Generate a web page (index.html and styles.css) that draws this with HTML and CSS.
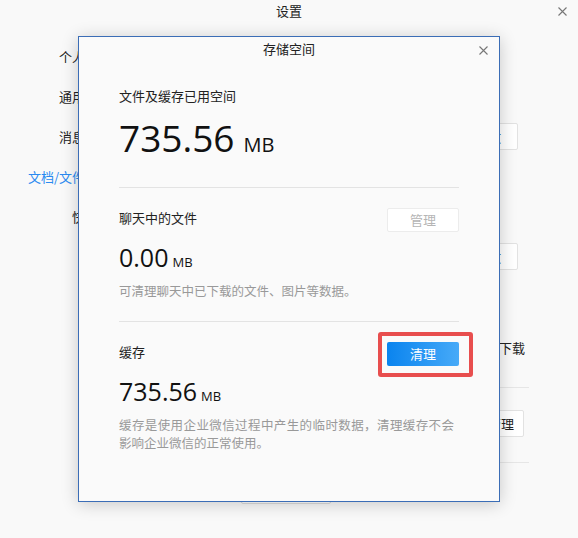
FILE: index.html
```html
<!DOCTYPE html>
<html lang="zh-CN">
<head>
<meta charset="utf-8">
<title>设置</title>
<link rel="stylesheet" href="styles.css">
</head>
<body>
<div class="window">
  <header class="win-header">
    <span></span>
    <span class="win-title">设置</span>
    <span class="win-close">
      <svg width="9" height="9" viewBox="0 0 9 9"><path d="M0.5 0.5 L8.5 8.5 M8.5 0.5 L0.5 8.5" stroke="#777" stroke-width="1.1" fill="none"/></svg>
    </span>
  </header>
  <div class="win-body">
    <nav class="side">
      <div class="side-item">个人信息</div>
      <div class="side-item">通用设置</div>
      <div class="side-item">消息通知</div>
      <div class="side-item active">文档/文件管理</div>
      <div class="side-item">快捷键</div>
    </nav>
    <main class="panel">
      <div class="ctl-box ctl-a">更改</div>
      <div class="ctl-box ctl-b">更改</div>
      <div class="dl-row">文件自动下载</div>
      <div class="panel-line line-a"></div>
      <div class="ctl-box ctl-c">管理</div>
      <div class="panel-line line-b"></div>
      <div class="bottom-btn">退出登录</div>
    </main>
  </div>

  <div class="dialog">
    <div class="dlg-header">
      <span class="dlg-title">存储空间</span>
      <span class="dlg-close">
        <svg width="9" height="9" viewBox="0 0 9 9"><path d="M0.5 0.5 L8.5 8.5 M8.5 0.5 L0.5 8.5" stroke="#777" stroke-width="1.1" fill="none"/></svg>
      </span>
    </div>
    <section class="sec sec-total">
      <div class="sec-label">文件及缓存已用空间</div>
      <div class="num-big"><span class="num">735.56</span><span class="unit">MB</span></div>
    </section>
    <section class="sec sec-item">
      <div class="sec-head">
        <span class="sec-label">聊天中的文件</span>
        <span class="btn btn-disabled">管理</span>
      </div>
      <div class="num-mid"><span class="num">0.00</span><span class="unit">MB</span></div>
      <p class="desc">可清理聊天中已下载的文件、图片等数据。</p>
    </section>
    <section class="sec sec-item">
      <div class="sec-head">
        <span class="sec-label">缓存</span>
        <span class="btn-wrap"><span class="btn btn-primary">清理</span></span>
      </div>
      <div class="num-mid"><span class="num">735.56</span><span class="unit">MB</span></div>
      <p class="desc">缓存是使用企业微信过程中产生的临时数据，清理缓存不会影响企业微信的正常使用。</p>
    </section>
  </div>
</div>
</body>
</html>
```

FILE: styles.css
```css
*, *::before, *::after { box-sizing: border-box; }

html, body {
  margin: 0;
  padding: 0;
}

body {
  width: 578px;
  height: 538px;
  overflow: hidden;
  background: #f9f9f9;
  font-family: "Noto Sans CJK SC", "Open Sans", sans-serif;
  font-size: 13px;
  color: #222;
}

.window {
  position: relative;
  width: 578px;
  height: 538px;
}

/* ---------- background window ---------- */
.win-header {
  height: 25px;
  display: grid;
  grid-template-columns: 1fr auto 1fr;
  align-items: start;
}

.win-title {
  line-height: 20px;
  padding-top: 1px;
  color: #222;
}

.win-close {
  justify-self: end;
  margin-right: 11px;
  margin-top: 7px;
  display: flex;
}

.win-body {
  display: grid;
  grid-template-columns: 111px 1fr;
  column-gap: 19px;
}

.side {
  padding-top: 22px;
  display: flex;
  flex-direction: column;
  gap: 20px;
  text-align: right;
}

.side-item {
  line-height: 20px;
  white-space: nowrap;
  color: #222;
}

.side-item.active {
  color: #2a8af0;
}

.panel {
  display: flex;
  flex-direction: column;
  align-items: flex-end;
  padding-right: 49px;
}

.ctl-box {
  height: 27px;
  line-height: 25px;
  background: #fff;
  border: 1px solid #e2e2e2;
  border-radius: 2px;
  text-align: center;
  color: #222;
}

.ctl-a { width: 60px; margin-top: 98px; margin-right: 11px; }
.ctl-b { width: 60px; margin-top: 93px; margin-right: 11px; }

.dl-row {
  margin-top: 68px;
  line-height: 20px;
  margin-right: 4px;
  color: #222;
}

.panel-line {
  align-self: stretch;
  height: 1px;
  background: #e6e6e6;
}

.line-a { margin-top: 29px; }
.ctl-c { width: 46px; margin-top: 22px; margin-right: 5px; }
.line-b { margin-top: 25px; }

.bottom-btn {
  align-self: flex-start;
  margin-left: 111px;
  margin-top: 13px;
  width: 90px;
  height: 28px;
  line-height: 26px;
  background: #fff;
  border: 1px solid #dcdcdc;
  border-radius: 2px;
  text-align: center;
}

/* ---------- dialog ---------- */
.dialog {
  position: absolute;
  left: 78px;
  top: 36px;
  width: 422px;
  height: 466px;
  background: #fafafa;
  border: 1px solid #3b6db6;
  box-shadow: 0 2px 16px rgba(0, 0, 0, 0.2);
}

.dlg-header {
  height: 24px;
  display: flex;
  justify-content: center;
  align-items: center;
  position: relative;
}

.dlg-title {
  line-height: 24px;
  color: #222;
}

.dlg-close {
  position: absolute;
  right: 11px;
  top: 9px;
  display: flex;
}

.sec {
  margin: 0 40px;
}

.sec + .sec {
  border-top: 1px solid #e3e3e3;
}

.sec-total {
  padding-top: 25px;
  padding-bottom: 27px;
}

.sec-label {
  line-height: 20px;
  color: #222;
}

.num {
  font-family: "Open Sans", sans-serif;
  color: #111;
}

.unit {
  line-height: 1;
  color: #111;
}

.num-big {
  margin-top: 10px;
  font-family: "Open Sans", sans-serif;
  font-size: 37px;
  line-height: 44px;
  white-space: nowrap;
}

.num-big .unit {
  font-size: 20px;
  margin-left: 9px;
}

.sec-item {
  padding-top: 20px;
  padding-bottom: 21px;
}

.sec-head {
  display: flex;
  justify-content: space-between;
  align-items: flex-start;
  height: 24px;
}

.num-mid {
  margin-top: 9px;
  font-family: "Open Sans", sans-serif;
  font-size: 25px;
  line-height: 32px;
  white-space: nowrap;
}

.num-mid .unit {
  font-size: 13px;
  margin-left: 4px;
}

.desc {
  margin: 9px 0 0;
  max-width: 335px;
  font-size: 12.5px;
  line-height: 18px;
  text-align: justify;
  color: #999;
}

.btn {
  display: block;
  width: 72px;
  height: 24px;
  line-height: 24px;
  text-align: center;
  border-radius: 2px;
  font-size: 13px;
}

.btn-disabled {
  background: #fff;
  border: 1px solid #ececec;
  line-height: 22px;
  color: #b5b5b5;
}

.btn-primary {
  background: linear-gradient(90deg, #0a84ef 0%, #47aaf8 100%);
  color: #fff;
}

.btn-wrap {
  position: relative;
  display: block;
}

.btn-wrap::after {
  content: "";
  position: absolute;
  left: -9px;
  top: -10px;
  width: 95px;
  height: 45px;
  border: 4px solid #e84e4e;
  border-radius: 3px;
}
```
